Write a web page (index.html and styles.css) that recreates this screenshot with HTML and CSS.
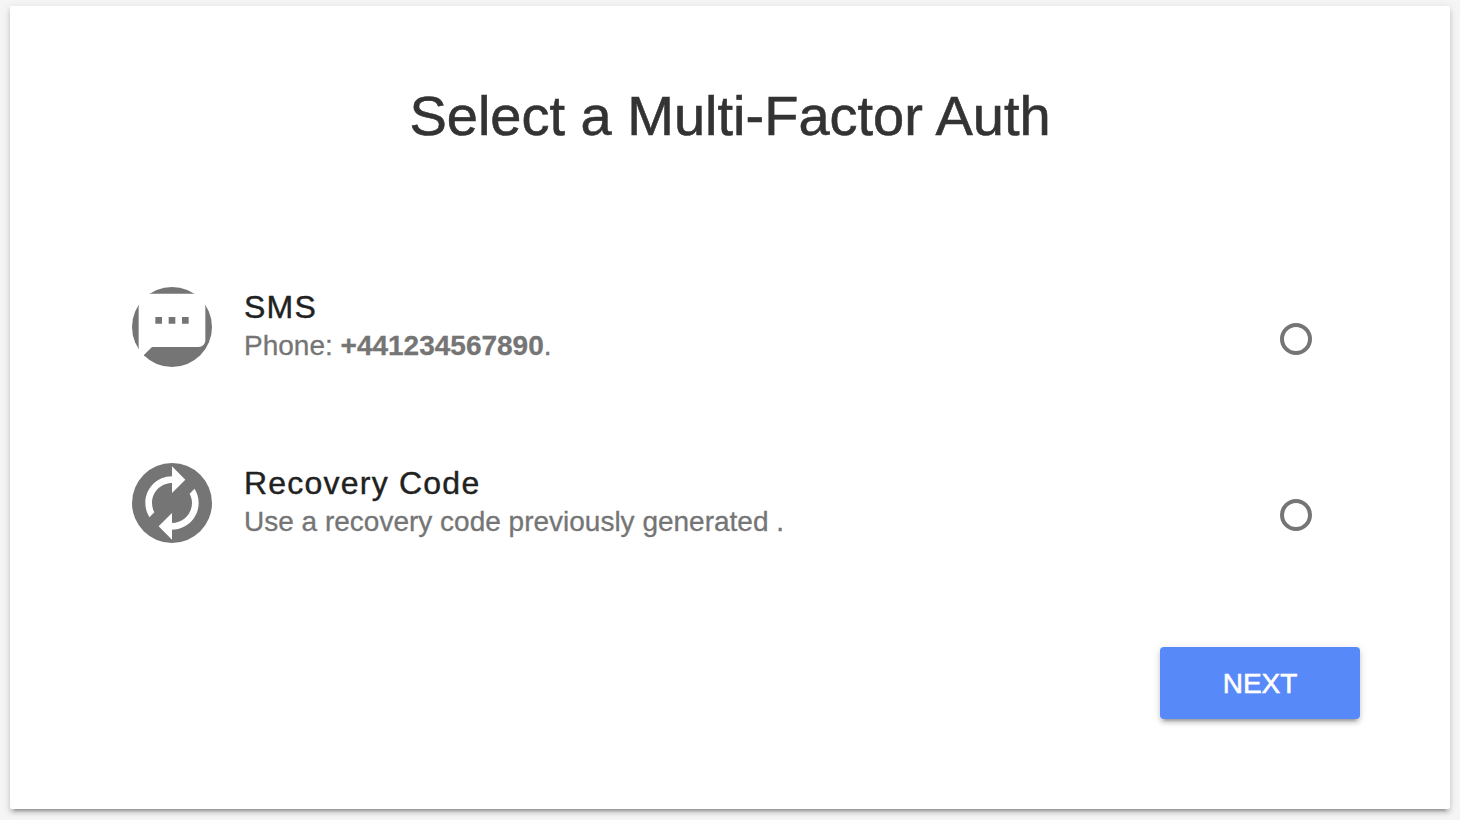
FILE: index.html
```html
<!DOCTYPE html>
<html lang="en">
<head>
<meta charset="utf-8">
<title>Select a Multi-Factor Auth</title>
<link rel="stylesheet" href="styles.css">
</head>
<body>
<main class="card">
  <h1 class="title">Select a Multi-Factor Auth</h1>
  <div class="options">
    <label class="option">
      <svg class="avatar" viewBox="0 0 24 24" aria-hidden="true">
        <mask id="sms"><rect width="24" height="24" fill="#fff"/><path fill="#000" d="M22 2H2v20l4-4h14c1.1 0 2-.9 2-2V2zM9 11H7V9h2v2zm4 0h-2V9h2v2zm4 0h-2V9h2v2z"/></mask>
        <circle cx="12" cy="12" r="12" mask="url(#sms)"/>
      </svg>
      <span class="text">
        <span class="name">SMS</span>
        <span class="detail">Phone: <b>+441234567890</b>.</span>
      </span>
      <input class="radio" type="radio" name="factor">
    </label>
    <label class="option">
      <svg class="avatar" viewBox="0 0 24 24" aria-hidden="true">
        <mask id="renew"><rect width="24" height="24" fill="#fff"/><path fill="#000" d="M12 6v3l4-4-4-4v3c-4.42 0-8 3.58-8 8 0 1.57.46 3.03 1.24 4.26L6.7 14.8c-.45-.83-.7-1.79-.7-2.8 0-3.31 2.69-6 6-6zm6.76 1.74L17.3 9.2c.44.84.7 1.79.7 2.8 0 3.31-2.69 6-6 6v-3l-4 4 4 4v-3c4.42 0 8-3.58 8-8 0-1.57-.46-3.03-1.24-4.26z"/></mask>
        <circle cx="12" cy="12" r="12" mask="url(#renew)"/>
      </svg>
      <span class="text">
        <span class="name">Recovery Code</span>
        <span class="detail">Use a recovery code previously generated .</span>
      </span>
      <input class="radio" type="radio" name="factor">
    </label>
  </div>
  <div class="actions"><button class="next" type="button">NEXT</button></div>
</main>
</body>
</html>
```
FILE: styles.css
```css
* { box-sizing: border-box; }
body {
  margin: 0;
  height: 820px;
  padding: 6px 10px 11px;
  background: #f5f5f5;
  font-family: "Liberation Sans", Arial, sans-serif;
  overflow: hidden;
}
.card {
  height: 803px;
  padding: 77px 90px 0;
  background: #fff;
  border-radius: 2px;
  box-shadow: 0 4px 4px 0 rgba(0,0,0,.14), 0 6px 2px -4px rgba(0,0,0,.2), 0 2px 10px 0 rgba(0,0,0,.12);
}
.title {
  margin: 0;
  font-size: 56px;
  font-weight: 400;
  line-height: 66px;
  text-align: center;
  color: #333;
  -webkit-text-stroke: .6px #333;
}
.options {
  display: flex;
  flex-direction: column;
  gap: 96px;
  margin-top: 138px;
  padding: 0 48px 0 32px;
}
.option { display: flex; height: 80px; gap: 32px; }
.avatar {
  width: 80px;
  height: 80px;
  flex: none;
  fill: #757575;
}
.text { flex: 1; display: flex; flex-direction: column; }
.name {
  font-size: 32px;
  line-height: 40px;
  letter-spacing: 1.22px;
  color: #212121;
  -webkit-text-stroke: .4px #212121;
}
.detail {
  font-size: 28px;
  line-height: 38px;
  color: #757575;
  -webkit-text-stroke: .3px #757575;
}
.radio {
  appearance: none;
  width: 32px;
  height: 32px;
  margin: 36px 0 0;
  border: 4px solid #757575;
  border-radius: 50%;
}
.actions { display: flex; justify-content: flex-end; margin-top: 104px; }
.next {
  width: 200px;
  height: 72px;
  padding: 1px 0 0;
  border: 0;
  border-radius: 4px;
  background: #5789f8;
  color: #fff;
  font: 28px/71px "Liberation Sans", Arial, sans-serif;
  -webkit-text-stroke: .6px #fff;
  box-shadow: 0 4px 4px 0 rgba(0,0,0,.14), 0 6px 2px -4px rgba(0,0,0,.2), 0 2px 10px 0 rgba(0,0,0,.12);
}
```
